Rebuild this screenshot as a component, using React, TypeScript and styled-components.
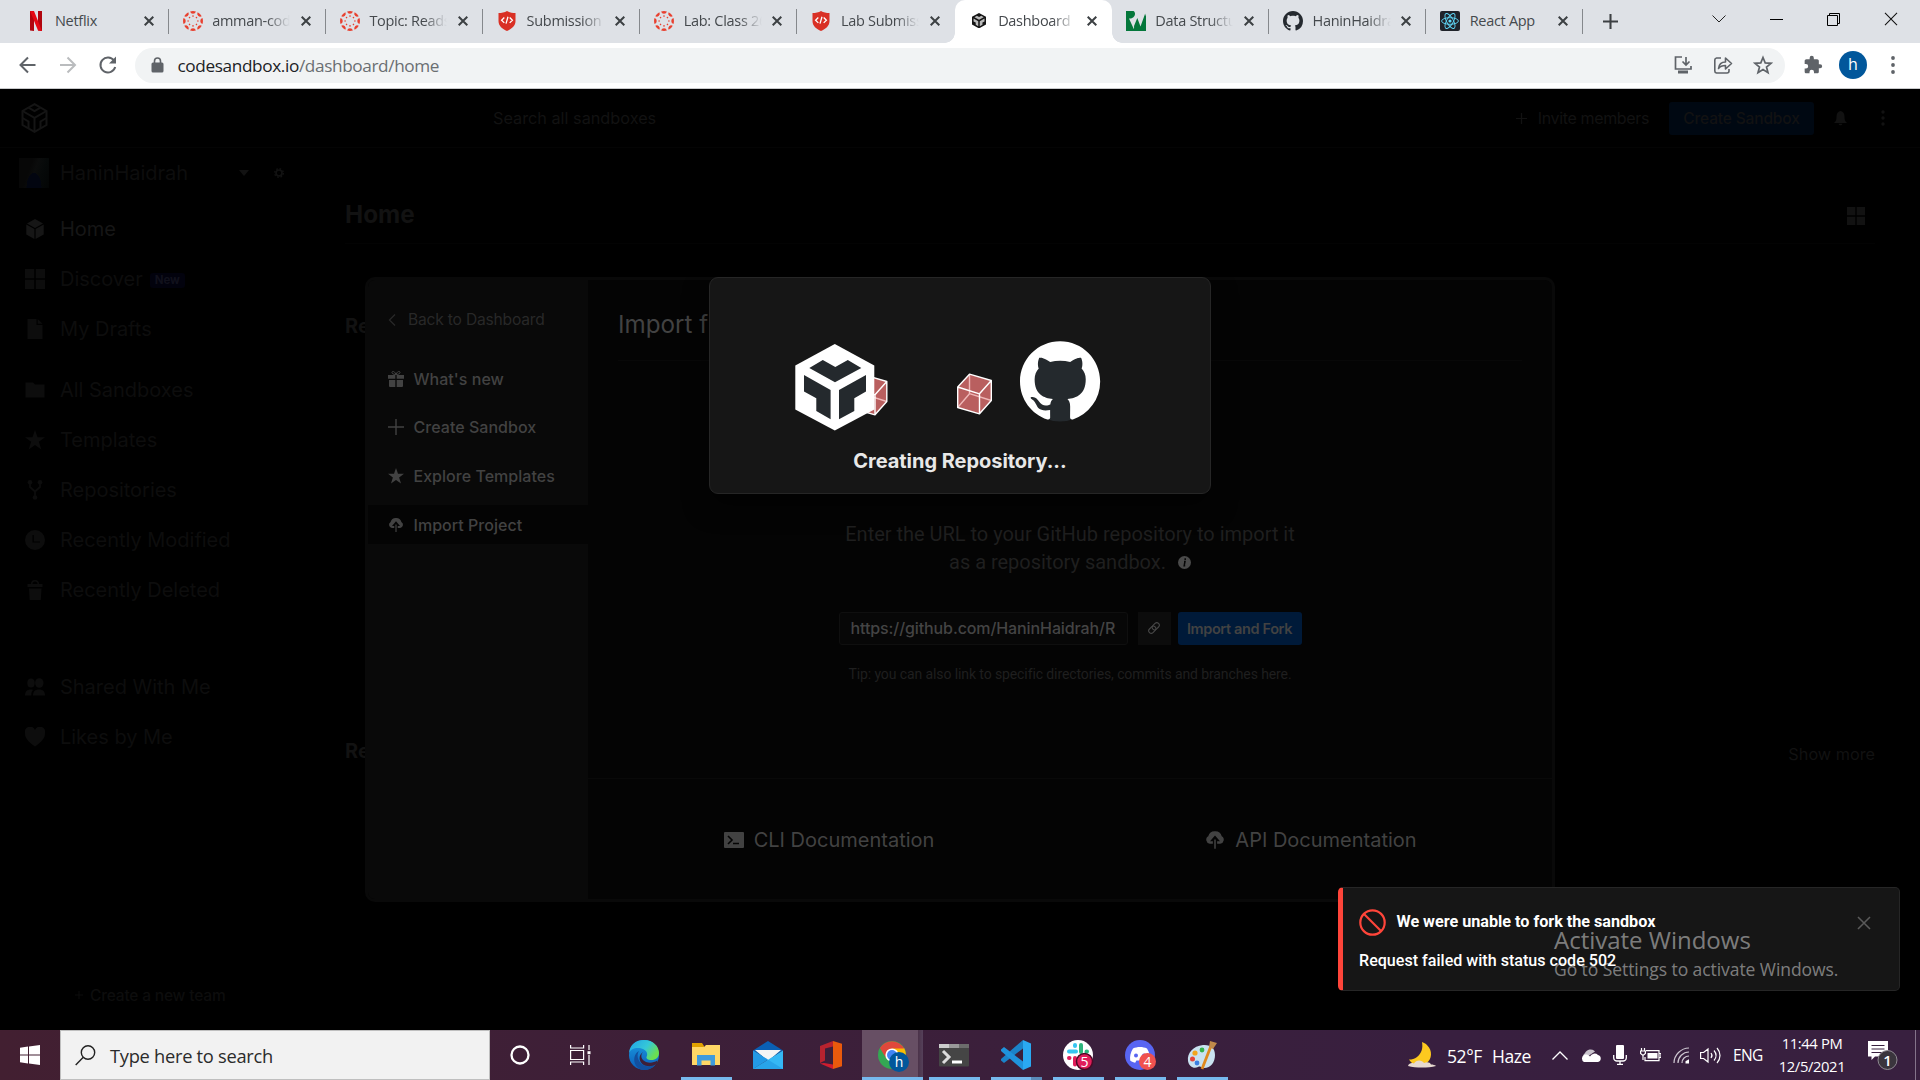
import React from "react";
import styled, { createGlobalStyle, css } from "styled-components";

const ui = `"Open Sans", "Noto Sans", sans-serif`;
const inter = `Inter, "Liberation Sans", sans-serif`;
const roboto = `Roboto, "Liberation Sans", sans-serif`;

const GlobalStyle = createGlobalStyle`
  * { box-sizing: border-box; }
  html, body { margin: 0; background: #000; overflow: hidden; }
  svg { display: block; flex: none; }
`;

const Screen = styled.div`
  width: 1920px;
  height: 1080px;
  display: flex;
  flex-direction: column;
  overflow: hidden;
  background: #000;
`;

/* ---------- browser chrome ---------- */

const TabStrip = styled.div`
  height: 43px;
  background: #dee1e6;
  display: flex;
  padding-left: 11.5px;
  flex: none;
`;

const TabBox = styled.div<{ $active?: boolean; $line?: boolean }>`
  width: 157.2px;
  height: 43px;
  display: flex;
  align-items: center;
  padding: 0 15px 2px 14px;
  position: relative;
  ${(p) =>
    p.$active &&
    css`
      background: #fff;
      border-radius: 10px 10px 0 0;
      &::before,
      &::after {
        content: "";
        position: absolute;
        bottom: 0;
        width: 10px;
        height: 10px;
      }
      &::before {
        left: -10px;
        background: radial-gradient(circle at 0 0, transparent 9.5px, #fff 10px);
      }
      &::after {
        right: -10px;
        background: radial-gradient(circle at 100% 0, transparent 9.5px, #fff 10px);
      }
    `}
  ${(p) =>
    p.$line &&
    css`
      background: linear-gradient(#85888c, #85888c) right 9px / 1px 25px no-repeat;
    `}
`;

const TabTitle = styled.div<{ $fade?: boolean }>`
  width: 78px;
  margin-left: 9.5px;
  overflow: hidden;
  white-space: nowrap;
  font: 400 14.5px/20px ${ui};
  letter-spacing: -0.3px;
  color: #45494d;
  ${(p) => p.$fade && css`mask-image: linear-gradient(90deg, #000 70%, transparent 100%);`}
`;

const TabClose = styled.div`
  margin-left: auto;
`;

const IconBox = styled.div`
  width: 20px;
  display: flex;
  justify-content: center;
`;

const NewTab = styled.div`
  width: 55px;
  display: flex;
  align-items: center;
  justify-content: center;
`;

const WindowButtons = styled.div`
  margin-left: auto;
  height: 38px;
  display: flex;
`;

const WindowButton = styled.div`
  width: 57.4px;
  display: flex;
  align-items: center;
  justify-content: center;
`;

const Toolbar = styled.div`
  height: 46px;
  flex: none;
  background: #fff;
  border-bottom: 1px solid #c9cacc;
  display: flex;
  align-items: center;
  padding: 0 0 1px 16px;
`;

const NavIcon = styled.div`
  width: 40px;
  flex: none;
  display: flex;
`;

const Omnibox = styled.div`
  width: 1650px;
  height: 35px;
  margin-left: -1px;
  border-radius: 18px;
  background: #f1f3f4;
  display: flex;
  align-items: center;
  padding: 0 12.5px 0 16px;
`;

const Url = styled.div`
  margin: 1px 0 0 13.5px;
  font: 400 17.2px/24px ${ui};
  letter-spacing: -0.37px;
  color: #6a6e72;
  white-space: nowrap;
  b {
    font-weight: 400;
    color: #202124;
  }
`;

const OmniActions = styled.div`
  margin-left: auto;
  display: flex;
  gap: 20px;
`;

const Extensions = styled.div`
  margin-left: 17.5px;
`;

const Profile = styled.div`
  width: 28px;
  height: 28px;
  margin: 0 23.5px 0 16.5px;
  border-radius: 50%;
  background: #01579b;
  color: #fff;
  font: 400 16px/27px ${ui};
  text-align: center;
`;

/* ---------- dashboard ---------- */

const Page = styled.div`
  height: 941px;
  flex: none;
  position: relative;
  background: #000;
  display: flex;
  flex-direction: column;
  font-family: ${inter};
  overflow: hidden;
`;

const Header = styled.div`
  height: 59px;
  flex: none;
  border-bottom: 1px solid #040404;
  display: flex;
  align-items: center;
  padding: 0 35px 0 21px;
  color: #121212;
`;

const SearchField = styled.div`
  width: 596px;
  height: 33px;
  margin-left: 437px;
  padding-left: 8px;
  font-size: 16.25px;
  line-height: 33px;
`;

const HeaderActions = styled.div`
  margin-left: auto;
  display: flex;
  align-items: center;
  font-size: 16px;
`;

const Invite = styled.div`
  display: flex;
  align-items: center;
  gap: 11px;
  margin-right: 20px;
  letter-spacing: -0.36px;
`;

const CreateButton = styled.div`
  width: 145px;
  height: 33px;
  border-radius: 3px;
  background: #000812;
  font-weight: 500;
  font-size: 15.5px;
  letter-spacing: -0.15px;
  line-height: 33px;
  text-align: center;
  margin-right: 20px;
`;

const MenuDots = styled.div`
  margin-left: 34px;
`;

const Body = styled.div`
  flex: 1;
  display: flex;
`;

const Sidebar = styled.div`
  width: 345px;
  display: flex;
  flex-direction: column;
  padding: 0 0 20px 19px;
  color: #0d0d0d;
`;

const SideRow = styled.div<{ $gap?: number; $bright?: boolean }>`
  height: 50px;
  flex: none;
  margin-top: ${(p) => p.$gap || 0}px;
  display: flex;
  align-items: center;
  font-size: 20px;
  letter-spacing: -0.02px;
  white-space: nowrap;
  color: ${(p) => (p.$bright ? "#161616" : "#0d0d0d")};
`;

const SideIcon = styled.div`
  width: 32px;
  margin-right: 9px;
  display: flex;
  justify-content: center;
`;

const Avatar = styled.div`
  width: 30px;
  height: 30px;
  margin-right: 11px;
  background: radial-gradient(ellipse at 50% 100%, #020510 0 35%, transparent 36%),
    linear-gradient(110deg, #070707 0 35%, #0b0c0c 50%, #060909 70%, #030505);
`;

const TeamName = styled.div`
  width: 179px;
`;

const SettingsGear = styled.div`
  margin-left: 25px;
`;

const NewBadge = styled.div`
  margin: 2px 0 0 7px;
  width: 35px;
  height: 15px;
  border-radius: 3px;
  background: #02020d;
  color: #11111c;
  font-weight: 700;
  font-size: 11.5px;
  line-height: 15px;
  text-align: center;
`;

const NewTeam = styled.div`
  margin-top: auto;
  padding-left: 56px;
  display: flex;
  align-items: center;
  gap: 7px;
  height: 30px;
  font-size: 15.5px;
  letter-spacing: -0.18px;
  font-weight: 500;
`;

const Content = styled.div`
  flex: 1;
  padding: 49px 45px 0 0;
  color: #121212;
`;

const TitleRow = styled.div`
  height: 47px;
  border-bottom: 1px solid #030303;
  display: flex;
  justify-content: space-between;
  padding-right: 10px;
`;

const PageTitle = styled.div`
  font-weight: 700;
  font-size: 24.3px;
  line-height: 34px;
`;

const ViewToggle = styled.div`
  padding-top: 10px;
`;

const SectionHead = styled.div<{ $gap: number }>`
  margin-top: ${(p) => p.$gap}px;
  height: 28px;
  display: flex;
  justify-content: space-between;
  align-items: center;
  font-weight: 700;
  font-size: 20px;
`;

const ShowMore = styled.div`
  font-weight: 400;
  font-size: 16.25px;
  margin-top: 6px;
`;

/* ---------- import modal ---------- */

const Overlay = styled.div`
  position: absolute;
  inset: 0;
  display: flex;
  justify-content: center;
  align-items: flex-start;
  padding-top: 188px;
`;

const Modal = styled.div`
  width: 1190px;
  height: 625px;
  border: 3px solid #090909;
  border-radius: 10px;
  background: #040404;
  display: flex;
  overflow: hidden;
  color: #424242;
`;

const ModalNav = styled.div`
  width: 220px;
  background: #090909;
  padding-top: 20px;
`;

const Back = styled.div`
  height: 39px;
  display: flex;
  align-items: center;
  padding-left: 20px;
  gap: 12px;
  color: #282828;
  font-size: 15.6px;
  letter-spacing: -0.2px;
  margin-bottom: 20.2px;
`;

const NavRow = styled.div<{ $on?: boolean }>`
  height: 39px;
  margin-bottom: 9.7px;
  padding-left: 20px;
  display: flex;
  align-items: center;
  gap: 9.5px;
  font-size: 16px;
  font-weight: 500;
  letter-spacing: 0.03px;
  background: ${(p) => (p.$on ? "#040404" : "transparent")};
`;

const ModalMain = styled.div`
  flex: 1;
  display: flex;
  flex-direction: column;
`;

const ModalTitle = styled.div`
  margin: 0 30px;
  height: 81px;
  padding-top: 27px;
  border-bottom: 1px solid #080808;
  font-size: 24.2px;
  line-height: 36px;
`;

const ImportArea = styled.div`
  height: 417px;
  padding-top: 158.5px;
  display: flex;
  flex-direction: column;
  align-items: center;
  font-family: ${roboto};
`;

const Description = styled.div`
  font-size: 20px;
  line-height: 28px;
  letter-spacing: -0.015px;
  color: #1f1f1f;
  text-align: center;
  white-space: nowrap;
`;

const InfoLine = styled.div`
  display: flex;
  align-items: center;
  justify-content: center;
  gap: 12px;
  svg {
    margin-top: 2px;
  }
`;

const ImportForm = styled.div`
  margin-top: 36px;
  height: 33px;
  display: flex;
`;

const UrlInput = styled.div`
  width: 289px;
  border: 1px solid #0f0f0f;
  border-radius: 3px;
  background: #070707;
  padding: 0 10px 0 11px;
  font: 500 16px/31px ${inter};
  letter-spacing: -0.1px;
  white-space: nowrap;
  color: #444;
  margin-right: 10px;
  div {
    overflow: hidden;
  }
`;

const LinkButton = styled.div`
  width: 33px;
  background: #0c0c0c;
  margin-right: 7px;
  display: flex;
  align-items: center;
  justify-content: center;
`;

const ForkButton = styled.div`
  width: 124px;
  border-radius: 3px;
  background: #001a39;
  font: 600 14.5px/33px ${inter};
  letter-spacing: -0.37px;
  text-align: center;
  white-space: nowrap;
`;

const Tip = styled.div`
  margin-top: 19px;
  font-size: 14px;
  line-height: 20px;
  letter-spacing: -0.1px;
  color: #1f1f1f;
  white-space: nowrap;
`;

const DocLinks = styled.div`
  flex: 1;
  border-top: 1px solid #090909;
  display: grid;
  grid-template-columns: 1fr 1fr;
`;

const DocLink = styled.div`
  display: flex;
  align-items: center;
  justify-content: center;
  gap: 10px;
  font-size: 20px;
  padding-top: 2px;
`;

/* ---------- progress dialog ---------- */

const Dialog = styled.div`
  width: 502px;
  height: 217px;
  border: 1px solid #262626;
  border-radius: 9px;
  background: #161616;
  box-shadow: 0 12px 24px rgba(0, 0, 0, 0.5);
  display: flex;
  flex-direction: column;
  align-items: center;
`;

const DialogTitle = styled.div`
  margin-top: -6px;
  font-weight: 700;
  font-size: 20px;
  line-height: 26px;
  letter-spacing: -0.04px;
  color: #e8e8e8;
`;

/* ---------- toast ---------- */

const Toast = styled.div`
  position: absolute;
  right: 20px;
  bottom: 39px;
  width: 562px;
  height: 104px;
  border-radius: 5px;
  border: 1px solid #262626;
  border-left: 5px solid #ff453a;
  background: #161616;
  padding: 20px 28px 0 16px;
  font-family: ${roboto};
  color: #fff;
`;

const ToastHead = styled.div`
  display: flex;
  align-items: center;
  height: 28px;
  font-weight: 700;
  font-size: 16.2px;
  letter-spacing: -0.02px;
  svg:last-child {
    margin: 2px 0 0 auto;
  }
`;

const ToastTitle = styled.div`
  margin: -2px 0 0 10.5px;
`;

const ToastText = styled.div`
  margin-top: 15px;
  font-weight: 500;
  font-size: 16.1px;
  line-height: 20px;
`;

const Watermark = styled.div`
  position: absolute;
  left: 1554px;
  top: 833px;
  font-family: ${ui};
  color: rgba(255, 255, 255, 0.46);
  white-space: nowrap;
`;

const WatermarkTitle = styled.div`
  font-size: 24px;
  line-height: 36px;
  letter-spacing: -0.01px;
`;

const WatermarkText = styled.div`
  font-size: 17.5px;
  line-height: 23px;
  letter-spacing: -0.07px;
`;

/* ---------- taskbar ---------- */

const Taskbar = styled.div`
  height: 50px;
  flex: none;
  display: flex;
  background: linear-gradient(90deg, #421f31 0%, #3d1f38 35%, #381f3f 75%, #38203f 100%);
  font-family: ${ui};
  color: #fff;
`;

const StartButton = styled.div`
  width: 60px;
  display: flex;
  align-items: center;
  justify-content: center;
`;

const SearchBox = styled.div`
  width: 430px;
  background: #f2f2f2;
  border: 1px solid #bfbfbf;
  display: flex;
  align-items: center;
  padding-left: 14px;
  gap: 14px;
  color: #2b2b2b;
  font-size: 18.3px;
  letter-spacing: -0.28px;
`;

const SysButton = styled.div`
  width: 60px;
  display: flex;
  align-items: center;
  justify-content: center;
`;

const AppList = styled.div`
  display: flex;
  margin-left: 3px;
`;

const AppSlot = styled.div<{ $run?: boolean; $active?: boolean; $stack?: boolean }>`
  width: 62px;
  height: 50px;
  display: flex;
  align-items: center;
  justify-content: center;
  ${(p) =>
    p.$run &&
    css`
      background: linear-gradient(#76b9ed, #76b9ed) 6px 100% / 51px 3px no-repeat;
    `}
  ${(p) =>
    p.$stack &&
    css`
      background: linear-gradient(90deg, #76b9ed 40px, #5a8ab8 40px) 6px 100% / 51px 3px no-repeat;
    `}
  ${(p) =>
    p.$active &&
    css`
      background: linear-gradient(#76b9ed, #76b9ed) 1px 100% / 61px 3px no-repeat,
        linear-gradient(90deg, transparent 1px, #674f64 1px, #674f64 57px, #4b3349 57px, #55405a 100%);
    `}
`;

const Tray = styled.div`
  margin-left: auto;
  display: flex;
  align-items: center;
  white-space: nowrap;
`;

const Weather = styled.div`
  display: flex;
  align-items: center;
  width: 145px;
  gap: 10px;
  font-size: 17.5px;
  letter-spacing: -0.4px;
  span {
    margin-top: 2px;
  }
`;

const TrayIcons = styled.div`
  display: flex;
  align-items: center;
  width: 181px;
`;

const TrayCell = styled.div<{ $w: number }>`
  width: ${(p) => p.$w}px;
`;

const Lang = styled.div`
  width: 43px;
  font-size: 15.5px;
  letter-spacing: -0.7px;
`;

const Clock = styled.div`
  width: 72px;
  text-align: center;
  font-size: 14.8px;
  line-height: 23px;
  letter-spacing: -0.4px;
`;

const Notify = styled.div`
  width: 67px;
  padding: 2px 0 0 20px;
`;

const ShowDesktop = styled.div`
  width: 5px;
  height: 50px;
  border-left: 1px solid #84748a;
`;

/* ---------- icons ---------- */

type P = { s?: number; c?: string };

const Cross = ({ s = 10, c = "#3c4043", w = 2 }: P & { w?: number }) => (
  <svg width={s} height={s} viewBox="0 0 10 10" stroke={c} strokeWidth={w} fill="none">
    <path d="M.7.7l8.6 8.6M9.3.7L.7 9.3" />
  </svg>
);

const Plus = ({ s = 16, c = "currentColor", w = 1.4 }: P & { w?: number }) => (
  <svg width={s} height={s} viewBox="0 0 16 16" stroke={c} strokeWidth={w}>
    <path d="M8 0v16M0 8h16" />
  </svg>
);

const NetflixIcon = () => (
  <svg width="20" height="20" viewBox="0 0 20 20">
    <path d="M4 0h4v20l-4-.4zM12 0h4v20l-4-.4z" fill="#b1060f" />
    <path d="M4 0h4l8 20-4-.4z" fill="#e50914" />
  </svg>
);

const CanvasIcon = () => (
  <svg width="20" height="20" viewBox="-10 -10 20 20">
    {Array.from({ length: 8 }, (_, i) => (
      <g key={i} transform={`rotate(${i * 45})`} fill="#e8402f">
        <path d="M-2.9-9.5A10 10 0 0 1 2.9-9.5A3 3 0 0 1-2.9-9.5z" />
        <circle cy="-4.9" r=".8" />
      </g>
    ))}
  </svg>
);

const ShieldIcon = () => (
  <svg width="20" height="20" viewBox="0 0 20 20">
    <path d="M10 0c2.5 1.4 5.3 2 8.5 2v8c0 5-4 8-8.5 10C5.5 18 1.5 15 1.5 10V2C4.7 2 7.5 1.4 10 0z" fill="#d93025" />
    <path d="M7.3 6.5L4.6 9.2l2.7 2.7M12.7 6.5l2.7 2.7-2.7 2.7M11 5.8L9 12.6" stroke="#fff" strokeWidth="1.3" fill="none" />
  </svg>
);

const BoxIcon = ({ w, line, fill }: { w: number; line: string; fill: string }) => (
  <svg width={w} height={(w * 87) / 79} viewBox="0 0 79 87">
    <path d="M39.5 0L79 21.5v44L39.5 87 0 65.5v-44z" fill={line} />
    <path
      d="M14 24l13.5-8 12.5 7 12.5-7L66 24 39.7 38.300zM8.700 31l26.600 15v29.300L21 67V54.300l-12.300-6.800zM70.700 31l-27 15v29.300L59 67V54.300l11.700-6.800z"
      fill={fill}
    />
  </svg>
);

const HeaderLogo = () => (
  <svg width="27" height="30" viewBox="0 0 27 30" fill="none" stroke="#151515" strokeWidth="2">
    <path d="M13.500 1.200L25.500 8v14L13.500 28.800 1.500 22V8z" />
    <path d="M1.500 8l12 6.800L25.500 8M13.500 14.800v14M7.500 4.700l6 3.400 6-3.400M1.500 15l6 3.500v6.700M25.500 15l-6 3.500v6.700" />
  </svg>
);

const DsIcon = () => (
  <svg width="20" height="20" viewBox="0 0 20 20">
    <path d="M0 0h20v20H0z" fill="#04773b" />
    <path d="M7.500 0H20v2.500L14.500 18l-3-8.500-3.700 8.500L3 7.500C6 8 9 5.500 9 3 9 1.500 8.500.5 7.500 0z" fill="#dee1e6" />
    <path d="M8 15L11.300 7l3.200 8.500L19 3v6l-4.500 11h-.8L11.300 13 8.500 20z" fill="#04773b" />
  </svg>
);

const ghPath =
  "M8 0C3.58 0 0 3.58 0 8c0 3.54 2.29 6.53 5.47 7.59.4.07.55-.17.55-.38 0-.19-.01-.82-.01-1.49-2.01.37-2.53-.49-2.69-.94-.09-.23-.48-.94-.82-1.13-.28-.15-.68-.52-.01-.53.63-.01 1.08.58 1.23.82.72 1.21 1.87.87 2.33.66.07-.52.28-.87.51-1.07-1.78-.2-3.64-.89-3.64-3.95 0-.87.31-1.59.82-2.15-.08-.2-.36-1.02.08-2.12 0 0 .67-.21 2.2.82.64-.18 1.32-.27 2-.27.68 0 1.36.09 2 .27 1.53-1.04 2.2-.82 2.2-.82.44 1.1.16 1.92.08 2.12.51.56.82 1.27.82 2.15 0 3.07-1.87 3.75-3.65 3.95.29.25.54.73.54 1.48 0 1.07-.01 1.93-.01 2.2 0 .21.15.46.55.38A8.012 8.012 0 0 0 16 8c0-4.42-3.58-8-8-8z";

const GithubIcon = () => (
  <svg width="20" height="20" viewBox="0 0 16 16">
    <path d={ghPath} fill="#24292f" />
  </svg>
);

const ReactIcon = () => (
  <svg width="20" height="20" viewBox="0 0 20 20">
    <rect width="20" height="20" rx="2" fill="#20232a" />
    <g stroke="#61dafb" fill="none" strokeWidth=".9" transform="translate(10 10)">
      {[0, 60, 120].map((a) => (
        <ellipse key={a} rx="8.4" ry="3.3" transform={`rotate(${a})`} />
      ))}
      <circle r="1.6" fill="#61dafb" stroke="none" />
    </g>
  </svg>
);

const Cloud = ({ s = 16, bg = "#040404" }: P & { bg?: string }) => (
  <svg width={s} height={s} viewBox="0 0 16 16">
    <path d="M3.800 11A3.300 3.300 0 0 1 2.600 4.900 5.400 5.400 0 0 1 8 1a5.400 5.400 0 0 1 5.400 3.900A3.300 3.300 0 0 1 12.200 11z" fill="currentColor" />
    <path d="M8 4.300l4 4.700H9.700v3H6.300V9H4z" fill={bg} />
    <path d="M7.400 7.500h1.200V15H7.400z" fill="currentColor" />
  </svg>
);

const Caret = ({ s = 16, c = "#fff" }: P) => (
  <svg width={s} height={s / 2 + 1} viewBox="0 0 16 9" fill="none" stroke={c} strokeWidth="1.3">
    <path d="M.5 8.5L8 1l7.5 7.5" />
  </svg>
);

const glyphs: Record<string, React.ReactNode> = {
  home: <path d="M10 0l8 4.400L10 9 2 4.400zM1.300 5.500L9.400 10v10l-8.100-4.600zM18.700 5.500L10.600 10v10l8.100-4.600z" />,
  grid: <path d="M0 0h9.200v9.200H0zM10.800 0H20v9.200h-9.200zM0 10.800h9.200V20H0zM10.800 10.800H20V20h-9.200z" />,
  file: <path d="M2.500 0h9v6h6v14h-15zM12.700 0l4.800 4.800h-4.800z" />,
  folder: <path d="M.5 2.500H8l2 2h9.500v13H.5z" />,
  star: <path d="M10 0l2.500 7.300H20l-6.100 4.500L16.300 19.500 10 15l-6.300 4.500 2.400-7.700L0 7.300h7.500z" />,
  fork: (
    <g fill="none" stroke="currentColor" strokeWidth="1.8">
      <path d="M5 2v5l5 4.500L15 7V2M10 11v7" />
      <g fill="currentColor" stroke="none">
        <circle cx="5" cy="2.300" r="2.300" />
        <circle cx="15" cy="2.300" r="2.300" />
        <circle cx="10" cy="17.500" r="2.300" />
      </g>
    </g>
  ),
  clock: <path fillRule="evenodd" d="M10 0a10 10 0 1 0 0 20 10 10 0 0 0 0-20zM7.500 5v7.500H15v-1H8.800V5z" />,
  trash: <path d="M6 4a4 4 0 0 1 8 0h3.500v3h-15V4zm1.500 0h5a2.500 2.500 0 0 0-5 0zM4 8.500h12.500l-.7 11.500H4.700z" />,
  people: (
    <>
      <ellipse cx="6" cy="6" rx="3.700" ry="4.500" />
      <ellipse cx="14.300" cy="6" rx="4.200" ry="4.800" />
      <path d="M0 18.500c0-4 2-6 6-6 1 0 1.500.2 2 .4-1.500 1-1.700 3-1.700 5.600zM8 18.500c0-4 2-6 6-6s6 2 6 6z" />
    </>
  ),
  heart: <path d="M10 19.500C3 14.500 0 11 0 6.500A5.300 5.300 0 0 1 10 3a5.300 5.300 0 0 1 10 3.500c0 4.500-3 8-10 13z" />,
};

const Glyph = ({ name, s = 20 }: { name: string; s?: number }) => (
  <svg width={s} height={s} viewBox="0 0 20 20" fill="currentColor">
    {glyphs[name]}
  </svg>
);

const Cube = () => (
  <g strokeWidth="1.4" strokeLinejoin="round">
    <path d="M12.500.7L34.300 7v20L22.500 40.300.7 34V13.500z" fill="#b95f5f" />
    <path d="M12.500.7v19.500L.7 34M12.500 20.200L34.300 27" stroke="#f0b8b8" fill="none" />
    <path d="M12.500.7L34.300 7v20L22.500 40.300.7 34V13.500zM.7 13.500l21.800 6.800L34.300 7M22.500 20.300v20" stroke="#fff" fill="none" />
  </g>
);

const ProgressArt = () => (
  <svg width="500" height="176" viewBox="710 278 500 176">
    <g transform="translate(852.5 374.5)">
      <Cube />
    </g>
    <g transform="translate(957 373.5)">
      <Cube />
    </g>
    <g transform="translate(795.3 344)">
      <path d="M39.500 0L79 21.500v44L39.500 86.500 0 65.500v-44z" fill="#fff" />
      <path
        d="M14 24l13.500-8 12.500 7 12.500-7L66 24 39.700 38.300zM8.700 31l26.600 15v29.300L21 67V54.300l-12.300-6.800zM70.700 31l-27 15v29.300L59 67V54.300l11.700-6.800z"
        fill="#24292d"
      />
    </g>
    <circle cx="1060" cy="382" r="39.500" fill="#24292d" />
    <path d={ghPath} transform="translate(1020 341.3) scale(5.01)" fill="#fff" />
  </svg>
);

const Badge = ({ x, y, r, fill, text, ring }: { x: number; y: number; r: number; fill: string; text: string; ring?: string }) => (
  <>
    <circle cx={x} cy={y} r={r} fill={fill} stroke={ring} strokeWidth={ring ? 1.5 : 0} />
    <text x={x} y={y + 5} textAnchor="middle" fontSize="14" fontFamily="Open Sans" fill="#fff">
      {text}
    </text>
  </>
);

const AppSvg = ({ children }: { children: React.ReactNode }) => (
  <svg width="34" height="34" viewBox="0 0 34 34" overflow="visible">
    {children}
  </svg>
);

const Edge = () => (
  <AppSvg>
    <defs>
      <linearGradient id="ea" x1="0" y1="0" x2="1" y2=".5">
        <stop offset="0" stopColor="#1fa2e8" />
        <stop offset=".6" stopColor="#35c8d8" />
        <stop offset="1" stopColor="#6be04f" />
      </linearGradient>
      <linearGradient id="eb" x1="0" y1="0" x2="0" y2="1">
        <stop offset="0" stopColor="#1b9de2" />
        <stop offset="1" stopColor="#0b5cb8" />
      </linearGradient>
    </defs>
    <circle cx="17" cy="17" r="15" fill="url(#eb)" />
    <path d="M2 15C3 6 9 2 17 2c9 0 15 6 15 13 0 4.500-3.500 7-7.500 7-4 0-5.500-1.500-5-3 1.500-2 1-7-5-8.500C9 9 3.500 11 2 15z" fill="url(#ea)" />
    <path d="M12 13c-3 4-1 11 4 14 4 2.300 9 1.800 13-1-3 4.500-8 6.500-13 6C10 31 6 25 7.500 19c.7-3 2.500-5 4.500-6z" fill="#124f9e" />
    <path d="M16 14c-3 3-2 8 3 10 4 1.500 8 .5 11.500-1.500l-1 3.500c-5 3-10 2.500-13.500.5-4-3-5-9 0-12.500z" fill="#3e1f38" />
  </AppSvg>
);

const Folder = () => (
  <AppSvg>
    <path d="M3 5h10l2 3v4H3z" fill="#e0a100" />
    <path d="M3 9h12l2-2h14v20H3z" fill="#ffd766" />
    <path d="M8 17h18v10.500h-4.500v-5h-9v5H8z" fill="#3f9bdc" />
  </AppSvg>
);

const Mail = () => (
  <AppSvg>
    <path d="M2 12.500L17 3l15 9.500-15 9z" fill="#0a5fb4" />
    <path d="M4 12h26L17 23z" fill="#f5f5f5" />
    <path d="M2 12.500l15 9L2 31z" fill="#2aa3ea" />
    <path d="M32 12.500L2 31h30z" fill="#35b8f5" />
    <path d="M2 12.500L32 31H2z" fill="#1c8fdf" opacity=".5" />
  </AppSvg>
);

const Office = () => (
  <AppSvg>
    <path d="M20 3L7 8v17l5-2.500V10.500l8-2z" fill="#b8232f" />
    <path d="M20 3l9 2.800v22.500L20 31z" fill="#ea5a0c" />
    <path d="M7 25.500L20 31v-4.500l-9-1.500z" fill="#d01d2f" />
  </AppSvg>
);

const Chrome = () => (
  <AppSvg>
    <circle cx="17" cy="17" r="14" fill="#34a853" />
    <path d="M17 10h12.100A14 14 0 0 1 17 31l6-11z" fill="#fbbc04" />
    <path d="M4.900 10A14 14 0 0 1 29.100 10.400H17L11 20z" fill="#e0483b" />
    <circle cx="17" cy="17" r="6.600" fill="#fff" />
    <circle cx="17" cy="17" r="5" fill="#4285f4" />
    <Badge x={24} y={24} r={10} fill="#01579b" text="h" />
  </AppSvg>
);

const Terminal = () => (
  <AppSvg>
    <rect x="2" y="6" width="30" height="22.500" rx="1" fill="#454545" />
    <path d="M2 6h10v4H2z" fill="#ccc" />
    <path d="M12 6h10v4H12z" fill="#999" />
    <path d="M22 6h10v4H22z" fill="#6c6c6c" />
    <path d="M6 13l6 6-6 6" stroke="#ddd" strokeWidth="3" fill="none" />
    <path d="M15 24h10" stroke="#fff" strokeWidth="3" />
  </AppSvg>
);

const VsCode = () => (
  <AppSvg>
    <path d="M24 2l8 3.500v23L24 32z" fill="#2aa9f2" />
    <path d="M24 2v8.500L5 25l-3-2.500V21z" fill="#1b83c9" />
    <path d="M24 32v-8.500L5 9l-3 2.500V13z" fill="#1f93dc" />
  </AppSvg>
);

const Slack = () => (
  <AppSvg>
    <circle cx="17" cy="17" r="15" fill="#fff" />
    <g strokeWidth="4" strokeLinecap="round">
      <path d="M8 13.500h7M14 7v1" stroke="#36c5f0" />
      <path d="M20 7v7M26 13.500h-.5" stroke="#2eb67d" />
      <path d="M26 20h-7" stroke="#ecb22e" />
      <path d="M14 20v6.500M8 20h.5" stroke="#e01e5a" />
    </g>
    <Badge x={23.5} y={23.5} r={8} fill="#e01e5a" ring="#4a0a26" text="5" />
  </AppSvg>
);

const Discord = () => (
  <AppSvg>
    <circle cx="17" cy="17" r="15" fill="#5865f2" />
    <path d="M10 10.500c4-2 10-2 14 0 2.500 4 3.300 8 2.800 12-2 1.500-3.500 2-5 2.300l-1.200-2.300h-7.200l-1.200 2.300c-1.500-.3-3-.8-5-2.300-.5-4 .3-8 2.800-12z" fill="#fff" />
    <circle cx="13" cy="17.500" r="2" fill="#5865f2" />
    <circle cx="21" cy="17.500" r="2" fill="#5865f2" />
    <Badge x={24.5} y={23.5} r={8.5} fill="#f0514f" text="4" />
  </AppSvg>
);

const Paint = () => (
  <AppSvg>
    <path d="M18 7C8 8 2 15 3 23c1 6 6 8 10 6 3-1.500 3 1 6 1 7 0 11-6 11-13S26 6.500 18 7z" fill="#c9e2f0" />
    <circle cx="10" cy="15" r="2.600" fill="#f2a51e" />
    <circle cx="17" cy="12" r="2.400" fill="#35b34a" />
    <circle cx="7.500" cy="21" r="2.500" fill="#e4453a" />
    <circle cx="12" cy="25" r="2.400" fill="#3b7fe0" />
    <path d="M26 8L17 31" stroke="#e08a1e" strokeWidth="2.800" />
    <path d="M24 9l1-6 7 2-4 6z" fill="#c08a4a" />
  </AppSvg>
);

/* ---------- data ---------- */

const tabs = [
  { t: "Netflix", i: <NetflixIcon />, line: true },
  { t: "amman-code", i: <CanvasIcon />, line: true, fade: true },
  { t: "Topic: Reads", i: <CanvasIcon />, line: true, fade: true },
  { t: "Submission", i: <ShieldIcon />, line: true, fade: true },
  { t: "Lab: Class 26", i: <CanvasIcon />, line: true, fade: true },
  { t: "Lab Submiss", i: <ShieldIcon />, fade: true },
  { t: "Dashboard", i: <BoxIcon w={14} line="#151515" fill="#bbb" />, active: true, fade: true },
  { t: "Data Structu", i: <DsIcon />, line: true, fade: true },
  { t: "HaninHaidra", i: <GithubIcon />, line: true, fade: true },
  { t: "React App", i: <ReactIcon />, line: true },
];

const sideRows: { t: string; i: string; gap?: number; bright?: boolean; isNew?: boolean }[] = [
  { t: "Home", i: "home", gap: 6, bright: true },
  { t: "Discover", i: "grid", isNew: true },
  { t: "My Drafts", i: "file" },
  { t: "All Sandboxes", i: "folder", gap: 11 },
  { t: "Templates", i: "star" },
  { t: "Repositories", i: "fork" },
  { t: "Recently Modified", i: "clock" },
  { t: "Recently Deleted", i: "trash" },
  { t: "Shared With Me", i: "people", gap: 47 },
  { t: "Likes by Me", i: "heart" },
];

export default function App() {
  return (
    <Screen>
      <GlobalStyle />
      <TabStrip>
        {tabs.map((t) => (
          <TabBox key={t.t} $active={t.active} $line={t.line}>
            <IconBox>{t.i}</IconBox>
            <TabTitle $fade={t.fade}>{t.t}</TabTitle>
            <TabClose>
              <Cross />
            </TabClose>
          </TabBox>
        ))}
        <NewTab>
          <Plus s={15} c="#3c4043" w={2.2} />
        </NewTab>
        <WindowButtons>
          <WindowButton>
            <svg width="14" height="8" viewBox="0 0 14 8" fill="none" stroke="#222">
              <path d="M.5.5L7 7l6.500-6.500" />
            </svg>
          </WindowButton>
          <WindowButton>
            <svg width="13" height="1">
              <rect width="13" height="1" fill="#000" />
            </svg>
          </WindowButton>
          <WindowButton>
            <svg width="13" height="13" viewBox="0 0 13 13" fill="none" stroke="#000">
              <path d="M.5 2.500h10v10H.5zM2.500 2.500v-2h10v10h-2" />
            </svg>
          </WindowButton>
          <WindowButton>
            <Cross s={14} c="#111" w={0.75} />
          </WindowButton>
        </WindowButtons>
      </TabStrip>

      <Toolbar>
        <NavIcon>
          <svg width="24" height="20" viewBox="0 0 24 20" fill="none" stroke="#5f6368" strokeWidth="2">
            <path d="M19.500 10H4.500M12 2.500L4.500 10l7.500 7.500" />
          </svg>
        </NavIcon>
        <NavIcon>
          <svg width="24" height="20" viewBox="0 0 24 20" fill="none" stroke="#babcbe" strokeWidth="2">
            <path d="M4 10h15M11.500 2.500L19 10l-7.500 7.500" />
          </svg>
        </NavIcon>
        <NavIcon>
          <svg width="24" height="20" viewBox="0 0 24 20" fill="none" stroke="#5f6368" strokeWidth="2">
            <path d="M18 5.500A7.500 7.500 0 1 0 19.200 12" />
            <path d="M20 1.500V8.500h-7z" fill="#5f6368" stroke="none" />
          </svg>
        </NavIcon>
        <Omnibox>
          <svg width="13" height="16" viewBox="0 0 13 16">
            <path d="M3.500 6V4a3 3 0 0 1 6 0v2" fill="none" stroke="#5f6368" strokeWidth="1.600" />
            <rect x=".5" y="5.500" width="12" height="10" rx="1.500" fill="#5f6368" />
          </svg>
          <Url>
            <b>codesandbox.io</b>/dashboard/home
          </Url>
          <OmniActions>
            <svg width="20" height="20" viewBox="0 0 20 20" fill="none" stroke="#5f6368" strokeWidth="1.700">
              <path d="M9 2H2.500v12H18v-3M13 2v7M9.500 6.500L13 10l3.500-3.500" />
              <path d="M5 15.500h10v3H5z" fill="#5f6368" stroke="none" />
            </svg>
            <svg width="20" height="20" viewBox="0 0 20 20" fill="none" stroke="#5f6368" strokeWidth="1.600">
              <path d="M8 3H3.500A2 2 0 0 0 1.800 5v11a2 2 0 0 0 1.700 2H14a2 2 0 0 0 2-2v-2" />
              <path d="M5.500 13.500c.5-4.500 3-6.500 7-6.500V3l6 5.500-6 5.500v-3.500c-3.500 0-5.500.8-7 3z" strokeLinejoin="round" />
            </svg>
            <svg width="20" height="20" viewBox="0 0 20 20" fill="none" stroke="#5f6368" strokeWidth="1.700">
              <path d="M10 2.500l2.200 5.400 5.800.4-4.500 3.700 1.500 5.700-5-3.200-5 3.200L6.500 12 2 8.300l5.800-.4z" />
            </svg>
          </OmniActions>
        </Omnibox>
        <Extensions>
          <svg width="20" height="20" viewBox="0 0 24 24" fill="#5f6368">
            <path d="M20.500 11H19V7c0-1.100-.9-2-2-2h-4V3.500a2.500 2.500 0 0 0-5 0V5H4c-1.100 0-2 .9-2 2v3.800h1.500a2.700 2.700 0 0 1 0 5.400H2V20c0 1.100.9 2 2 2h3.800v-1.500a2.700 2.700 0 0 1 5.400 0V22H17c1.100 0 2-.9 2-2v-4h1.500a2.500 2.500 0 0 0 0-5z" />
          </svg>
        </Extensions>
        <Profile>h</Profile>
        <svg width="4" height="18" viewBox="0 0 4 18" fill="#5f6368">
          <circle cx="2" cy="2" r="1.900" />
          <circle cx="2" cy="9" r="1.900" />
          <circle cx="2" cy="16" r="1.900" />
        </svg>
      </Toolbar>

      <Page>
        <Header>
          <HeaderLogo />
          <SearchField>Search all sandboxes</SearchField>
          <HeaderActions>
            <Invite>
              <Plus s={11} w={1.8} /> Invite members
            </Invite>
            <CreateButton>Create Sandbox</CreateButton>
            <svg width="13" height="15" viewBox="0 0 13 15" fill="currentColor">
              <path d="M6.500 0c3 .6 4 2.500 4 6 0 3 .5 4 2.500 6H0c2-2 2.500-3 2.500-6 0-3.500 1-5.400 4-6zM4.700 12.800h3.600c-.3 2-3.300 2-3.600 0z" />
            </svg>
            <MenuDots>
              <svg width="4" height="16" viewBox="0 0 4 16" fill="currentColor">
                <circle cx="2" cy="2" r="1.700" />
                <circle cx="2" cy="8" r="1.700" />
                <circle cx="2" cy="14" r="1.700" />
              </svg>
            </MenuDots>
          </HeaderActions>
        </Header>
        <Body>
          <Sidebar>
            <SideRow>
              <Avatar />
              <TeamName>HaninHaidrah</TeamName>
              <svg width="10" height="6" viewBox="0 0 10 6" fill="#121212">
                <path d="M0 0h10L5 6z" />
              </svg>
              <SettingsGear>
                <svg width="10" height="10" viewBox="0 0 10 10" fill="none" stroke="#121212">
                  <circle cx="5" cy="5" r="3" strokeWidth="1.700" />
                  <circle cx="5" cy="5" r="4.300" strokeWidth="1.400" strokeDasharray="1.700 1.680" />
                </svg>
              </SettingsGear>
            </SideRow>
            {sideRows.map((r) => (
              <SideRow key={r.t} $gap={r.gap} $bright={r.bright}>
                <SideIcon>
                  <Glyph name={r.i} />
                </SideIcon>
                {r.t}
                {r.isNew && <NewBadge>New</NewBadge>}
              </SideRow>
            ))}
            <NewTeam>
              <Plus s={8} w={2} /> Create a new team
            </NewTeam>
          </Sidebar>
          <Content>
            <TitleRow>
              <PageTitle>Home</PageTitle>
              <ViewToggle>
                <Glyph name="grid" s={18} />
              </ViewToggle>
            </TitleRow>
            <SectionHead $gap={68}>Re</SectionHead>
            <SectionHead $gap={397}>
              Re
              <ShowMore>Show more</ShowMore>
            </SectionHead>
          </Content>
        </Body>

        <Overlay>
          <Modal>
            <ModalNav>
              <Back>
                <svg width="8" height="12" viewBox="0 0 8 12" fill="none" stroke="currentColor" strokeWidth="1.300">
                  <path d="M7 .5L1.500 6 7 11.500" />
                </svg>
                Back to Dashboard
              </Back>
              <NavRow>
                <svg width="16" height="16" viewBox="0 0 16 16" fill="currentColor">
                  <path d="M0 4h7.300v3.700H0zM8.700 4H16v3.700H8.700zM1 9h6.300v7H2a1 1 0 0 1-1-1zM8.700 9H15v6a1 1 0 0 1-1 1H8.700z" />
                  <path d="M8 3.500C5 3.500 3.500 2.300 4 1c.8-1.300 3-.5 4 2.500C9 .5 11.200-.3 12 1c.5 1.300-1 2.500-4 2.500z" fill="none" stroke="currentColor" />
                </svg>
                What's new
              </NavRow>
              <NavRow>
                <Plus s={16} />
                Create Sandbox
              </NavRow>
              <NavRow>
                <Glyph name="star" s={16} />
                Explore Templates
              </NavRow>
              <NavRow $on>
                <Cloud s={16} />
                Import Project
              </NavRow>
            </ModalNav>
            <ModalMain>
              <ModalTitle>Import f</ModalTitle>
              <ImportArea>
                <Description>
                  Enter the URL to your GitHub repository to import it
                  <InfoLine>
                    as a repository sandbox.
                    <svg width="13" height="13" viewBox="0 0 13 13">
                      <circle cx="6.500" cy="6.500" r="6.500" fill="#4a4a4a" />
                      <path d="M7.200 2.300v1.800M6 5.500h1l-.8 4.200h1" stroke="#060606" strokeWidth="1.500" fill="none" />
                    </svg>
                  </InfoLine>
                </Description>
                <ImportForm>
                  <UrlInput>
                    <div>https://github.com/HaninHaidrah/R</div>
                  </UrlInput>
                  <LinkButton>
                    <svg width="14" height="14" viewBox="0 0 14 14" fill="none" stroke="#484848" strokeWidth="1.100">
                      <rect x="-4" y="-2.500" width="8" height="5" rx="2.500" transform="translate(8.700 5.300) rotate(-45)" />
                      <rect x="-4" y="-2.500" width="8" height="5" rx="2.500" transform="translate(5.300 8.700) rotate(-45)" />
                    </svg>
                  </LinkButton>
                  <ForkButton>Import and Fork</ForkButton>
                </ImportForm>
                <Tip>Tip: you can also link to specific directories, commits and branches here.</Tip>
              </ImportArea>
              <DocLinks>
                <DocLink>
                  <svg width="20" height="16" viewBox="0 0 20 16">
                    <rect width="20" height="16" rx="1" fill="currentColor" />
                    <path d="M4 4l4 4-4 4M9 11.500h6" stroke="#040404" strokeWidth="1.600" fill="none" />
                  </svg>
                  CLI Documentation
                </DocLink>
                <DocLink>
                  <Cloud s={20} />
                  API Documentation
                </DocLink>
              </DocLinks>
            </ModalMain>
          </Modal>
        </Overlay>

        <Overlay>
          <Dialog>
            <ProgressArt />
            <DialogTitle>Creating Repository...</DialogTitle>
          </Dialog>
        </Overlay>

        <Toast>
          <ToastHead>
            <svg width="27" height="27" viewBox="0 0 27 27" fill="none" stroke="#ff453a" strokeWidth="2.200">
              <circle cx="13.500" cy="13.500" r="12.200" />
              <path d="M5 5l17 17" />
            </svg>
            <ToastTitle>We were unable to fork the sandbox</ToastTitle>
            <Cross s={14} c="#5a5a5a" w={1.1} />
          </ToastHead>
          <ToastText>Request failed with status code 502</ToastText>
        </Toast>
        <Watermark>
          <WatermarkTitle>Activate Windows</WatermarkTitle>
          <WatermarkText>Go to Settings to activate Windows.</WatermarkText>
        </Watermark>
      </Page>

      <Taskbar>
        <StartButton>
          <svg width="20" height="20" viewBox="0 0 20 20" fill="#fff">
            <path d="M0 2.700L8 1.500v8H0zM9 1.400L20 0v9.500H9zM0 10.500h8v8l-8-1.200zM9 10.500h11V20L9 18.600z" />
          </svg>
        </StartButton>
        <SearchBox>
          <svg width="21" height="21" viewBox="0 0 21 21" fill="none" stroke="#222" strokeWidth="1.400">
            <circle cx="13" cy="7.500" r="6.700" />
            <path d="M8.300 12.300L.7 20" />
          </svg>
          Type here to search
        </SearchBox>
        <SysButton>
          <svg width="20" height="20" viewBox="0 0 20 20" fill="none" stroke="#fff" strokeWidth="2.300">
            <circle cx="10" cy="10" r="8.500" />
          </svg>
        </SysButton>
        <SysButton>
          <svg width="21" height="20" viewBox="0 0 21 20" fill="none" stroke="#fff" strokeWidth="1.200">
            <path d="M.6 5.500h13v9H.6zM.6 0v3h13V0M.6 20v-3h13v3M19 0v5M19 10v10" />
            <path d="M17.500 6.200h3v3h-3z" fill="#fff" stroke="none" />
          </svg>
        </SysButton>
        <AppList>
          <AppSlot><Edge /></AppSlot>
          <AppSlot $run><Folder /></AppSlot>
          <AppSlot><Mail /></AppSlot>
          <AppSlot><Office /></AppSlot>
          <AppSlot $active><Chrome /></AppSlot>
          <AppSlot $run><Terminal /></AppSlot>
          <AppSlot $stack><VsCode /></AppSlot>
          <AppSlot $run><Slack /></AppSlot>
          <AppSlot $run><Discord /></AppSlot>
          <AppSlot $run><Paint /></AppSlot>
        </AppList>
        <Tray>
          <Weather>
            <svg width="30" height="26" viewBox="0 0 30 26">
              <path d="M15 0c1 6 0 11-5 15-2.500 2-5 2.500-8 2.500 3 5 9 7.500 15 5 7-3 9-11 5-17-1.700-2.700-4-4.500-7-5.500z" fill="#fdc91f" />
              <path d="M1 24c1-3 4-3.500 6-2.500 2-4 8-4 10-.5 3-1.500 6-1 7 1.500 2 0 4 .5 5 1.500-8 2-20 2-28 0z" fill="#e6d9cf" />
            </svg>
            <span>52°F</span>
            <span>Haze</span>
          </Weather>
          <TrayIcons>
            <TrayCell $w={28}>
              <Caret s={16} />
            </TrayCell>
            <TrayCell $w={33}>
              <svg width="21" height="13" viewBox="0 0 21 13">
                <path d="M5 12a5 5 0 0 1 0-8 6 6 0 0 1 10-1.500l-9 6z" fill="#c9c3cc" />
                <path d="M4 13a4 4 0 0 1 0-7c2-1 4-.5 6 1.500a5 5 0 0 1 8-1.500 3.600 3.600 0 0 1 0 7z" fill="#fff" />
              </svg>
            </TrayCell>
            <TrayCell $w={27}>
              <svg width="14" height="20" viewBox="0 0 14 20" fill="none" stroke="#fff" strokeWidth="1.300">
                <rect x="3" y="0" width="8" height="14" rx="1" fill="#fff" stroke="none" />
                <path d="M.7 10v3c0 2 2 3 3 3h6.600c1 0 3-1 3-3v-3M7 16v3.300M4 19.300h6" />
              </svg>
            </TrayCell>
            <TrayCell $w={33}>
              <svg width="21" height="14" viewBox="0 0 21 14" fill="none" stroke="#fff" strokeWidth="1.200">
                <path d="M6 2.600h13v10H5V9M19.500 5.500h1.500v4h-1.500" />
                <path d="M7.500 5h10v5.500h-10z" fill="#fff" stroke="none" />
                <path d="M1.500 0v3M4.500 0v3M.6 3h4.800v2.500L3 7.500.6 5.500zM3 7.500V12" />
              </svg>
            </TrayCell>
            <TrayCell $w={27}>
              <svg width="17" height="17" viewBox="0 0 17 17" fill="none" stroke="#cfc8d2" strokeWidth="1.200">
                <path d="M1 16C1 8 8 1 16 1M5 16C5 10 10 5 16 5M9 16c0-4 3-7 7-7" />
                <path d="M12.500 16.500v-2.300l3.500-2v4.300z" fill="#fff" stroke="none" />
              </svg>
            </TrayCell>
            <TrayCell $w={33}>
              <svg width="21" height="17" viewBox="0 0 21 17" fill="none" stroke="#fff" strokeWidth="1.200">
                <path d="M.6 5.500h3L8 2v13L3.600 11.500h-3zM11 6c1.200 1.500 1.200 3.500 0 5M14 3.500c2.500 3 2.500 7 0 10M17 1c4 4.500 4 10.500 0 15" />
              </svg>
            </TrayCell>
          </TrayIcons>
          <Lang>ENG</Lang>
          <Clock>
            11:44 PM
            <br />
            12/5/2021
          </Clock>
          <Notify>
            <svg width="32" height="30" viewBox="0 0 32 30">
              <path d="M0 0h20v15.500H7L3.500 19v-3.500H0z" fill="#fff" />
              <path d="M3.500 4.500h13M3.500 8h13M3.500 11.500h13" stroke="#38203f" strokeWidth="1.200" />
              <circle cx="19.500" cy="19" r="9.500" fill="#3a353d" stroke="#8f8a92" />
              <text x="19.500" y="24.500" textAnchor="middle" fontSize="15" fontWeight="600" fontFamily="Open Sans" fill="#fff">
                1
              </text>
            </svg>
          </Notify>
          <ShowDesktop />
        </Tray>
      </Taskbar>
    </Screen>
  );
}
